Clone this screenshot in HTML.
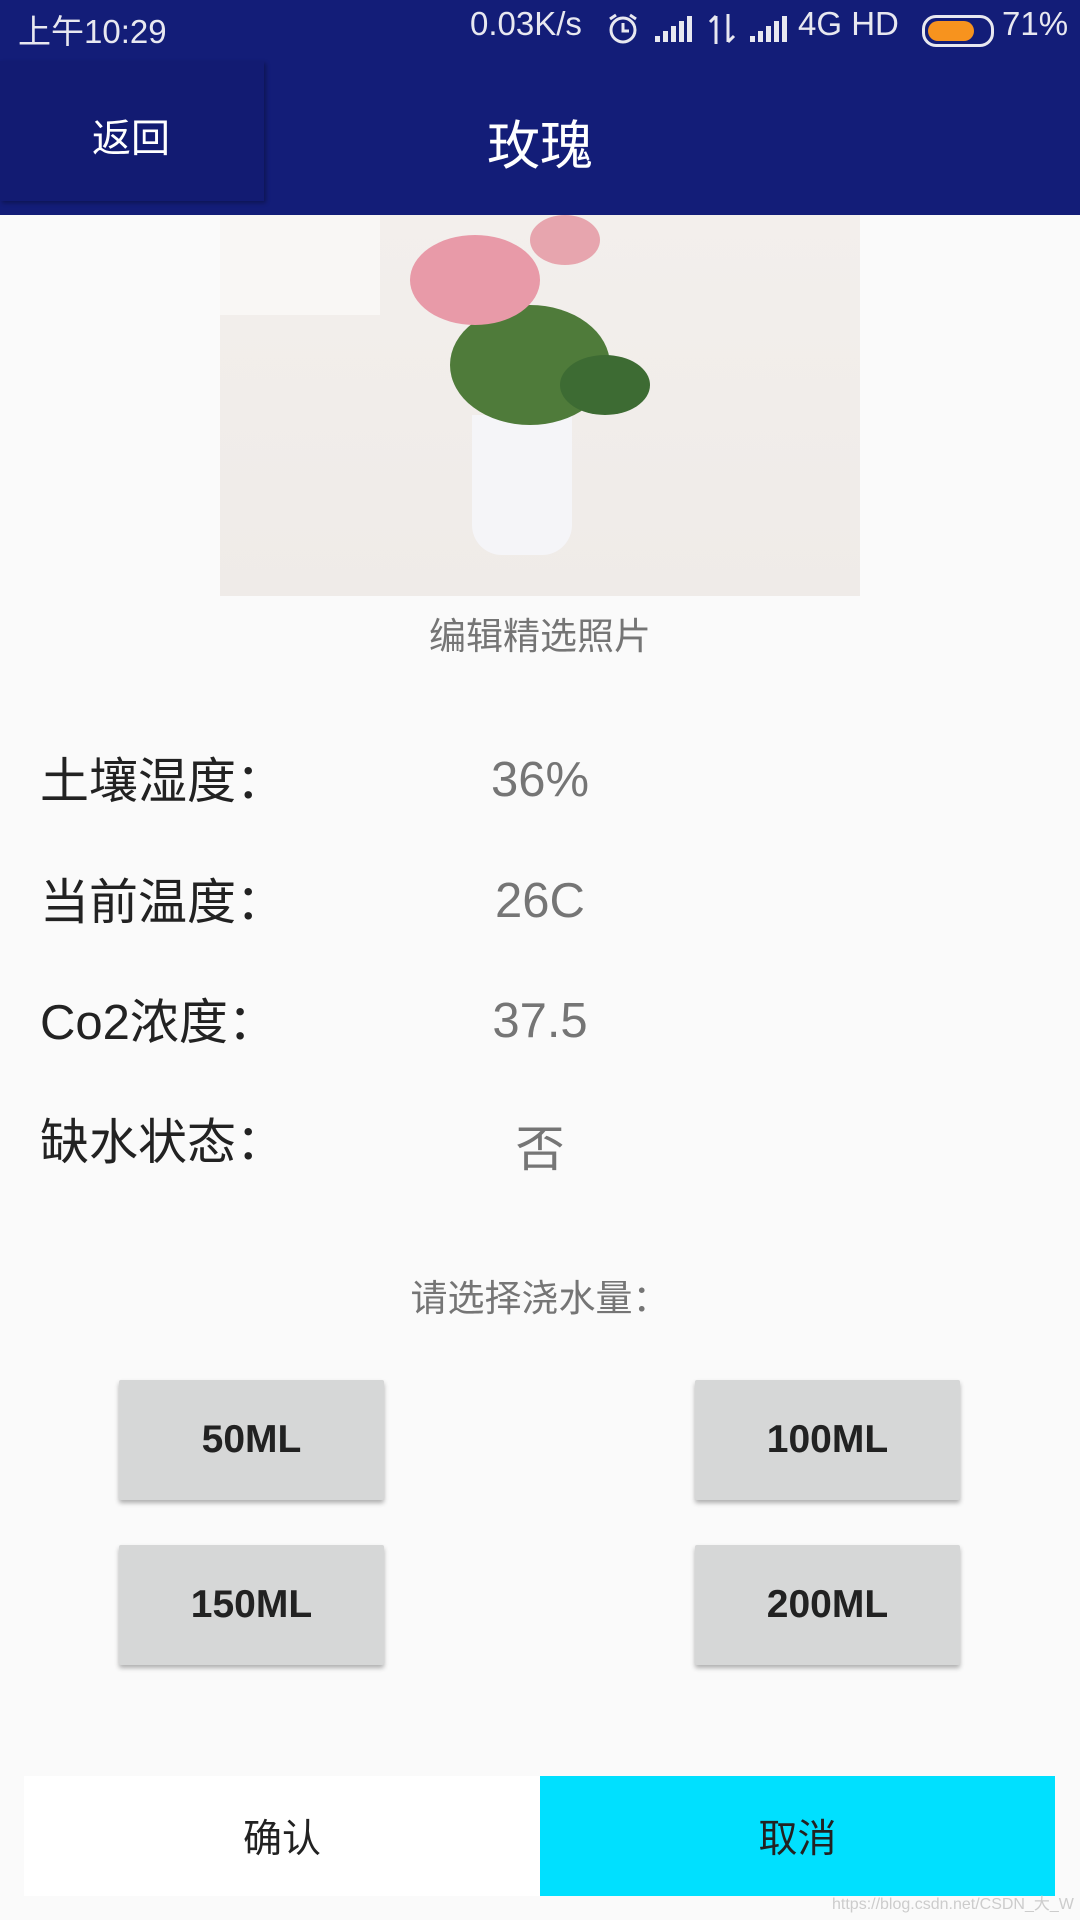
<!DOCTYPE html>
<html><head><meta charset="utf-8"><style>
body{margin:0;width:1080px;height:1920px;background:#fafafa;font-family:"Liberation Sans","Noto Sans CJK SC",sans-serif;position:relative;overflow:hidden}
.abs{position:absolute}
.hdr{left:0;top:0;width:1080px;height:215px;background:#131d78}
.sb{color:#e8e8f0;font-size:33px;top:5px;white-space:nowrap}
.lbl{left:40px;font-size:49px;color:#222}
.val{left:340px;width:400px;text-align:center;font-size:49px;color:#757575}
.btn{background:#d6d7d7;width:265px;height:120px;box-shadow:0 3px 5px rgba(0,0,0,.3);font-weight:bold;font-size:39px;color:#222;display:flex;align-items:center;justify-content:center;border-radius:2px}
</style></head><body>
<div class="abs hdr"></div>
<div class="abs" style="left:0;top:61px;width:264px;height:140px;background:#121b72;box-shadow:2px 2px 4px rgba(0,0,0,.3)"></div>
<div class="abs sb" style="left:18px">上午10:29</div>
<div class="abs sb" style="left:470px">0.03K/s</div>
<svg class="abs" style="left:606px;top:12px" width="34" height="34" viewBox="0 0 34 34" fill="none" stroke="#e8e8f0" stroke-width="3"><circle cx="17" cy="18" r="12"/><path d="M17 11v8h6M4 7l6-4M30 7l-6-4"/></svg>
<svg class="abs" style="left:655px;top:16px" width="40" height="26"><g fill="#e8e8f0"><rect x="0" y="20" width="5" height="6"/><rect x="8" y="15" width="5" height="11"/><rect x="16" y="10" width="5" height="16"/><rect x="24" y="5" width="5" height="21"/><rect x="32" y="0" width="5" height="26"/></g></svg>
<svg class="abs" style="left:708px;top:12px" width="28" height="34" fill="none" stroke="#e8e8f0" stroke-width="3"><path d="M8 32V4M2 10l6-6M20 2v28M26 24l-6 6"/></svg>
<svg class="abs" style="left:750px;top:16px" width="40" height="26"><g fill="#e8e8f0"><rect x="0" y="20" width="5" height="6"/><rect x="8" y="15" width="5" height="11"/><rect x="16" y="10" width="5" height="16"/><rect x="24" y="5" width="5" height="21"/><rect x="32" y="0" width="5" height="26"/></g></svg>
<div class="abs sb" style="left:798px">4G HD</div>
<div class="abs" style="left:922px;top:15px;width:66px;height:26px;border:3px solid #e8e8f0;border-radius:14px"><div style="margin:3px;width:46px;height:20px;background:#f7931e;border-radius:10px"></div></div>
<div class="abs sb" style="left:1002px">71%</div>
<div class="abs" style="left:92px;top:108px;font-size:39px;color:#fff">返回</div>
<div class="abs" style="left:440px;width:200px;text-align:center;top:104px;font-size:53px;color:#fff">玫瑰</div>
<div class="abs" style="left:220px;top:215px;width:640px;height:381px;background:linear-gradient(180deg,#f3efec,#efebe8)">
 <div class="abs" style="left:0;top:0;width:160px;height:100px;background:#f9f7f5"></div>
 <div class="abs" style="left:252px;top:200px;width:100px;height:140px;background:#f5f5f8;border-radius:0 0 30px 30px"></div>
 <div class="abs" style="left:230px;top:90px;width:160px;height:120px;background:#4f7b3a;border-radius:50%"></div>
 <div class="abs" style="left:190px;top:20px;width:130px;height:90px;background:#e89aa8;border-radius:50%"></div>
 <div class="abs" style="left:310px;top:0;width:70px;height:50px;background:#e7a5ae;border-radius:50%"></div>
 <div class="abs" style="left:340px;top:140px;width:90px;height:60px;background:#3d6b33;border-radius:50%"></div>
</div>
<div class="abs" style="left:340px;width:400px;text-align:center;top:606px;font-size:37px;color:#757575">编辑精选照片</div>
<div class="abs lbl" style="top:742px">土壤湿度：</div><div class="abs val" style="top:752px">36%</div>
<div class="abs lbl" style="top:863px">当前温度：</div><div class="abs val" style="top:873px">26C</div>
<div class="abs lbl" style="top:983px">Co2浓度：</div><div class="abs val" style="top:993px">37.5</div>
<div class="abs lbl" style="top:1103px">缺水状态：</div><div class="abs val" style="top:1110px">否</div>
<div class="abs" style="left:340px;width:400px;text-align:center;top:1268px;font-size:37px;color:#757575">请选择浇水量：</div>
<div class="abs btn" style="left:119px;top:1380px">50ML</div>
<div class="abs btn" style="left:695px;top:1380px">100ML</div>
<div class="abs btn" style="left:119px;top:1545px">150ML</div>
<div class="abs btn" style="left:695px;top:1545px">200ML</div>
<div class="abs" style="left:24px;top:1776px;width:516px;height:120px;background:#fff;display:flex;align-items:center;justify-content:center;font-size:39px;color:#222">确认</div>
<div class="abs" style="left:540px;top:1776px;width:515px;height:120px;background:#00e0ff;display:flex;align-items:center;justify-content:center;font-size:39px;color:#222">取消</div>
<div class="abs" style="left:832px;top:1890px;font-size:16px;color:#ccc;white-space:nowrap">https://blog.csdn.net/CSDN_大_W</div>
</body></html>
